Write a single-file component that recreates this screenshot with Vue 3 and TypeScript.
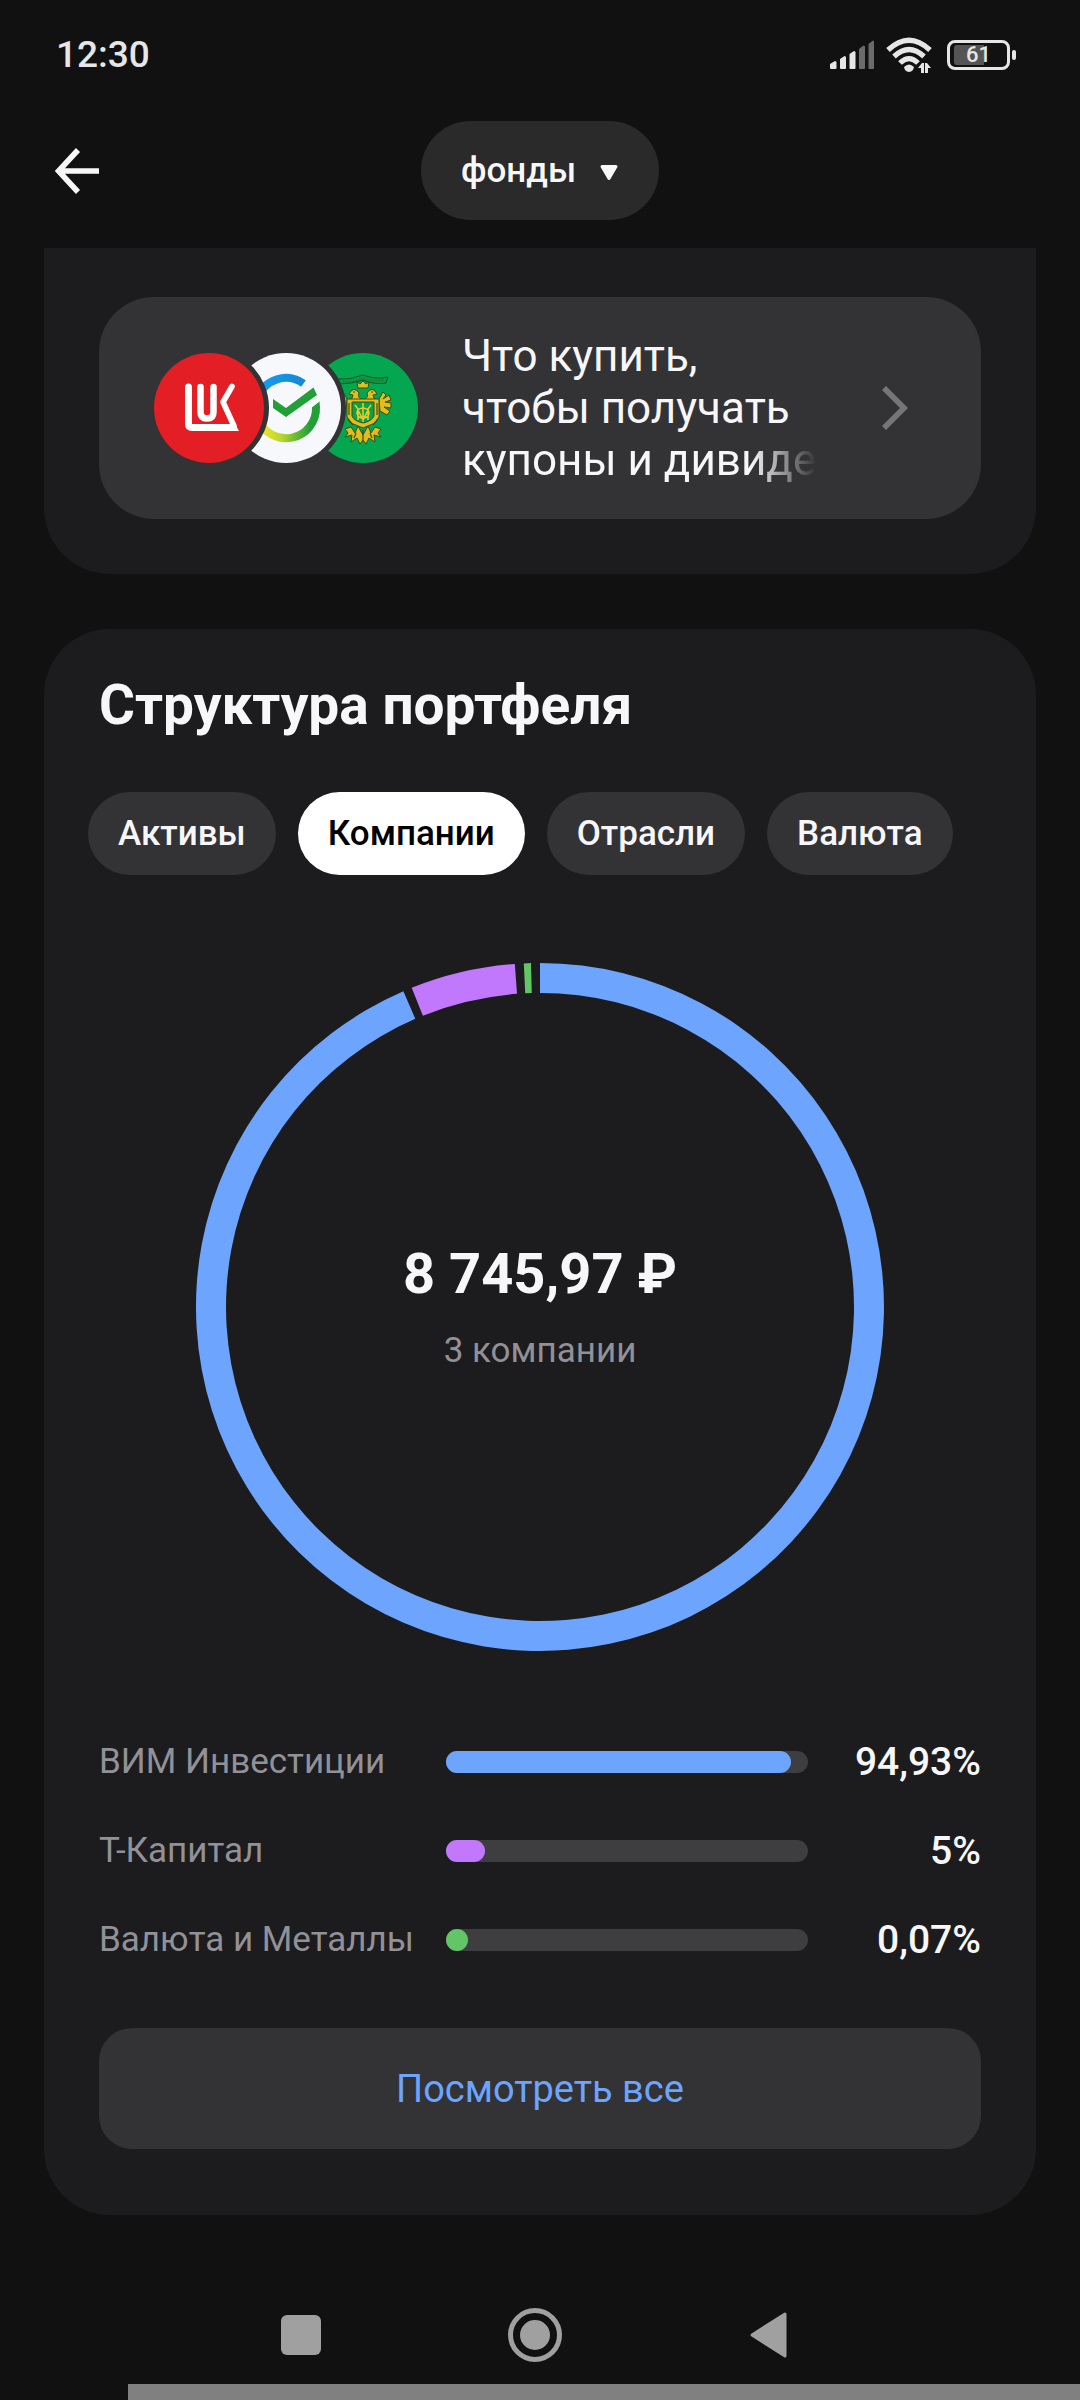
<script setup lang="ts">
import { ref } from 'vue'

interface Holding {
  name: string
  share: number
  label: string
  color: string
  sweep: number
}

const account = ref('фонды')
const tabs = ['Активы', 'Компании', 'Отрасли', 'Валюта']
const activeTab = ref('Компании')

const holdings: Holding[] = [
  { name: 'ВИМ Инвестиции', share: 0.9493, label: '94,93%', color: '#6ca4fe', sweep: 336.6 },
  { name: 'Т-Капитал', share: 0.05, label: '5%', color: '#c278fc', sweep: 17.7 },
  { name: 'Валюта и Металлы', share: 0.0007, label: '0,07%', color: '#62c566', sweep: 1.2 },
]

const GAP = 1.5
const OUTER = 344
const INNER = 314

function point(radius: number, degrees: number): string {
  const a = (degrees * Math.PI) / 180
  return `${(OUTER + radius * Math.sin(a)).toFixed(2)} ${(OUTER - radius * Math.cos(a)).toFixed(2)}`
}

let cursor = 0
const segments = holdings.map((h) => {
  const from = cursor
  const to = cursor + h.sweep
  cursor = to + GAP
  const large = h.sweep > 180 ? 1 : 0
  return {
    color: h.color,
    d: `M${point(OUTER, from)}A${OUTER} ${OUTER} 0 ${large} 1 ${point(OUTER, to)}L${point(INNER, to)}A${INNER} ${INNER} 0 ${large} 0 ${point(INNER, from)}Z`,
  }
})

// A fill never gets narrower than its own round cap.
function fillWidth(share: number): string {
  return `calc(22px + (100% - 22px) * ${share})`
}
</script>

<template>
  <div class="screen">
    <div class="status">
      <span class="time">12:30</span>
      <div class="indicators">
        <svg class="signal" width="44" height="30" viewBox="0 0 44 30" aria-hidden="true">
          <g fill="#e6e6e6">
            <path d="M0 24l5-3q1.500 0 1.500 1.500V28q0 1-1 1H1q-1 0-1-1z" />
            <path d="M10 19l4.500-3q1.500 0 1.500 1.500V28q0 1-1 1h-4q-1 0-1-1z" />
            <path d="M19.500 14l4.500-3q1.500 0 1.500 1.500V28q0 1-1 1h-4q-1 0-1-1z" />
          </g>
          <g fill="#6b6b6b">
            <path d="M29 9l4.500-3.500q1.500 0 1.500 1.500V28q0 1-1 1h-4q-1 0-1-1z" />
            <path d="M38.500 4L43 .5q1 0 1 1.500V28q0 1-1 1h-3.500q-1 0-1-1z" />
          </g>
        </svg>
        <svg class="wifi" width="47" height="36" viewBox="0 0 47 36" aria-hidden="true">
          <g fill="none" stroke="#e6e6e6" stroke-width="5.200">
            <path d="M2 13Q23 -6.500 44 13" />
            <path d="M8 19.500Q23 5.500 38 19.500" />
            <path d="M14 26Q23 17 32 26" />
          </g>
          <path d="M18 30q5-5 10 0l-1 3q-4 4-8 0z" fill="#e6e6e6" />
          <path d="M32 31l4-5h2v10h-3v-5zM39 26h2l4 5h-3v5h-3z" fill="#e6e6e6" />
        </svg>
        <span class="battery">
          <span class="battery-case">
            <span class="battery-level"></span>
            <span class="battery-text">61</span>
          </span>
          <span class="battery-tip"></span>
        </span>
      </div>
    </div>

    <header class="header">
      <button class="back" type="button" aria-label="Назад">
        <svg width="44" height="46" viewBox="0 0 44 46" aria-hidden="true">
          <path d="M23 2L3.500 23L23 44M3 23H44" fill="none" stroke="#f7f7f8" stroke-width="5.600" />
        </svg>
      </button>
      <div class="picker">
        <select v-model="account" aria-label="Счёт">
          <option value="фонды">фонды</option>
        </select>
        <svg class="caret" width="20" height="18" viewBox="0 0 20 18" aria-hidden="true">
          <path d="M3 2.500H17L10 14.500Z" fill="#f9f9fb" stroke="#f9f9fb" stroke-width="3" stroke-linejoin="round" />
        </svg>
      </div>
      <span class="header-end"></span>
    </header>

    <main class="content">
      <section class="card card-cut">
        <a class="promo" href="#">
          <svg class="logos" width="264" height="110" viewBox="0 0 264 110" aria-hidden="true">
            <defs>
              <mask id="cut-white">
                <rect width="264" height="110" fill="#fff" />
                <circle cx="55" cy="55" r="60" fill="#000" />
              </mask>
              <mask id="cut-green">
                <rect width="264" height="110" fill="#fff" />
                <circle cx="132" cy="55" r="60" fill="#000" />
              </mask>
              <linearGradient id="arc-low" gradientUnits="userSpaceOnUse" x1="108" y1="0" x2="156" y2="0">
                <stop offset="0" stop-color="#efe62a" />
                <stop offset=".4" stop-color="#b8d62f" />
                <stop offset="1" stop-color="#21a038" />
              </linearGradient>
              <linearGradient id="arc-high" gradientUnits="userSpaceOnUse" x1="108" y1="0" x2="156" y2="0">
                <stop offset="0" stop-color="#169bf0" />
                <stop offset="1" stop-color="#1686d0" />
              </linearGradient>
            </defs>
            <circle cx="55" cy="55" r="55" fill="#e31e24" />
            <g fill="none" stroke="#fff" stroke-linecap="round" stroke-linejoin="round">
              <path d="M34.500 34V71Q34.500 74.500 38 74.500H79" stroke-width="7" />
              <path d="M46.500 34V59Q46.500 65.500 53 65.500Q59.500 65.500 59.500 59V34" stroke-width="6.500" />
              <path d="M78 33.500L69 49L80 73" stroke-width="5.600" />
            </g>
            <path d="M76 71H81L85 78H74Z" fill="#fff" />
            <g mask="url(#cut-white)">
              <circle cx="132" cy="55" r="55" fill="#f6f8fb" />
              <path d="M103.700 45A30 30 0 0 1 149.500 30.600" fill="none" stroke="url(#arc-high)" stroke-width="8" />
              <path d="M104 66A30 30 0 0 0 162 54" fill="none" stroke="url(#arc-low)" stroke-width="8" />
              <path d="M158 54.500L165.500 48.500L166 55H158Z" fill="#21a038" />
              <path d="M119 46L132 55L159.500 34.500L163 42L132 64L119 55Z" fill="#21a038" />
            </g>
            <g mask="url(#cut-green)">
              <circle cx="209" cy="55" r="55" fill="#04a64f" />
              <path d="M184 26Q196 27 209 22Q222 27 234 24L232 30Q221 32 209 27Q198 31 185 31Z" fill="#0b9a45" stroke="#11572c" stroke-width="1" />
              <path d="M189 28.500Q199 30 209 25Q220 29 230 27" fill="none" stroke="#2c6d2f" stroke-width="1" stroke-dasharray="2 1" />
              <g fill="#e2bd1c" stroke="#34501a" stroke-width="1">
                <path d="M204 35L203 29L206 31L209 28L212 31L215 29L214 35Z" />
                <path d="M209 47Q203 45 205 40Q201 34 197 38L195 41L199 42Q199 46 195 47Z" />
                <path d="M209 47Q215 45 213 40Q217 34 221 38L223 41L219 42Q219 46 223 47Z" />
                <path d="M225 46L229 39L232 42L229 46L235 42L237 47L231 49L237 50L237 55L230 54L236 58L233 62L226 58Z" />
                <path d="M193 46L189 39L186 42L189 46L183 42L181 47L187 49L181 50L181 55L188 54L182 58L185 62L192 58Z" />
                <path d="M193 46H225V64L221 70L209 75L197 70L193 64Z" />
                <path d="M197 74L191 76L194 80L191 84L198 82L197 89L203 85L206 91L209 87L212 91L215 85L221 89L220 82L227 84L224 80L227 76L221 74L217 80L214 73L209 82L204 73L201 80Z" />
              </g>
              <path d="M198 49H220V63Q218 68 209 70Q200 68 198 63Z" fill="#08a04a" stroke="#34501a" />
              <path d="M201 52L204 56V67M217 52L214 56V67M204 57L209 67L214 57M209 50V69M203 60A6 5 0 0 1 215 60A6 5 0 0 1 203 60" fill="none" stroke="#e9cb25" stroke-width="1.600" />
              <path d="M194 66L199 72M224 66L219 72M209 77V87M202 80L200 85M216 80L218 85M195 50V62M223 50V62M199 39H201M217 39H219" stroke="#34501a" stroke-width="1.200" fill="none" />
            </g>
          </svg>
          <span class="promo-text">
            <span class="promo-line">Что купить,</span>
            <span class="promo-line">чтобы получать</span>
            <span class="promo-line fade">купоны и дивиденды</span>
          </span>
          <svg class="chevron" width="28" height="46" viewBox="0 0 28 46" aria-hidden="true">
            <path d="M3 3L23 23L3 43" fill="none" stroke="#767678" stroke-width="5.600" />
          </svg>
        </a>
      </section>

      <section class="card structure">
        <h1>Структура портфеля</h1>
        <div class="tabs">
          <button
            v-for="tab in tabs"
            :key="tab"
            type="button"
            class="tab"
            :class="{ active: tab === activeTab }"
            :aria-pressed="tab === activeTab"
            @click="activeTab = tab"
          >{{ tab }}</button>
        </div>

        <div class="ring">
          <svg viewBox="0 0 688 688" aria-hidden="true">
            <path v-for="s in segments" :key="s.color" :d="s.d" :fill="s.color" />
          </svg>
          <div class="summary">
            <strong>8 745,97 ₽</strong>
            <span>3 компании</span>
          </div>
        </div>

        <ul class="holdings">
          <li v-for="h in holdings" :key="h.name">
            <span class="name">{{ h.name }}</span>
            <span class="track"><span class="fill" :style="{ width: fillWidth(h.share), background: h.color }"></span></span>
            <span class="value">{{ h.label }}</span>
          </li>
        </ul>

        <button class="more" type="button">Посмотреть все</button>
      </section>
    </main>

    <nav class="system-nav">
      <button type="button" aria-label="Недавние">
        <svg width="54" height="54" viewBox="0 0 54 54"><rect x="7" y="7" width="40" height="40" rx="6" fill="#a0a0a0" /></svg>
      </button>
      <button type="button" aria-label="Домой">
        <svg width="54" height="54" viewBox="0 0 54 54">
          <circle cx="27" cy="27" r="24.500" fill="none" stroke="#a0a0a0" stroke-width="5" />
          <circle cx="27" cy="27" r="15" fill="#a0a0a0" />
        </svg>
      </button>
      <button type="button" aria-label="Назад">
        <svg width="54" height="54" viewBox="0 0 54 54"><path d="M10 27L43 6V48Z" fill="#a0a0a0" stroke="#a0a0a0" stroke-width="3" stroke-linejoin="round" /></svg>
      </button>
    </nav>
    <div class="edge"></div>
  </div>
</template>

<style>
body {
  margin: 0;
  background: #111111;
}
</style>

<style scoped>
.screen {
  display: flex;
  flex-direction: column;
  min-height: 100vh;
  background: #111111;
  color: #f7f7fa;
  font-family: Roboto, "Noto Sans", sans-serif;
}

button,
select {
  margin: 0;
  padding: 0;
  border: 0;
  background: none;
  color: inherit;
  font: inherit;
}

svg {
  display: block;
}

.status {
  display: flex;
  align-items: center;
  justify-content: space-between;
  height: 110px;
  padding: 0 64px 0 56px;
}

.time {
  color: #e6e6e6;
  font-size: 37px;
  font-weight: 500;
  line-height: 44px;
}

.indicators {
  display: flex;
  align-items: center;
  gap: 12px;
}

.battery {
  display: flex;
  align-items: center;
  gap: 2px;
  margin-left: 2px;
}

.battery-case {
  display: grid;
  align-items: center;
  box-sizing: border-box;
  width: 63px;
  height: 30px;
  border: 3px solid #e6e6e6;
  border-radius: 8px;
}

.battery-level,
.battery-text {
  grid-area: 1 / 1;
}

.battery-level {
  width: 30px;
  height: 20px;
  margin-left: 4px;
  border-radius: 3px 0 0 3px;
  background: #555555;
}

.battery-text {
  color: #e6e6e6;
  font-size: 22px;
  font-weight: 500;
  line-height: 24px;
  text-align: center;
}

.battery-tip {
  width: 4px;
  height: 10px;
  border-radius: 2px;
  background: #e6e6e6;
}

.header {
  display: grid;
  grid-template-columns: 1fr auto 1fr;
  align-items: center;
  padding: 11px 55px 28px;
}

.back {
  justify-self: start;
}

.picker {
  position: relative;
}

.picker select {
  height: 99px;
  padding: 0 82px 0 40px;
  border-radius: 50px;
  background: #2a2a2a;
  appearance: none;
  font-size: 35px;
  font-weight: 500;
}

.caret {
  position: absolute;
  top: 43px;
  right: 40px;
  pointer-events: none;
}

.content {
  display: flex;
  flex-direction: column;
  gap: 55px;
  padding: 0 44px;
}

.card {
  border-radius: 66px;
  background: #1c1c1e;
}

.card-cut {
  padding: 49px 55px 55px;
  border-radius: 0 0 66px 66px;
}

.promo {
  display: flex;
  align-items: center;
  box-sizing: border-box;
  height: 222px;
  padding: 0 72px 0 55px;
  border-radius: 55px;
  background: #333335;
  color: inherit;
  text-decoration: none;
}

.logos {
  flex: none;
}

.promo-text {
  flex: 1;
  min-width: 0;
  margin: 0 64px 0 44px;
  font-size: 44px;
  line-height: 52px;
}

.promo-line {
  display: block;
  overflow: hidden;
  white-space: nowrap;
}

.fade {
  mask-image: linear-gradient(to left, transparent, #000 66px);
}

.structure {
  padding: 44px 55px 66px;
}

h1 {
  margin: 0;
  font-size: 55px;
  font-weight: 700;
  line-height: 64px;
}

.tabs {
  display: flex;
  gap: 22px;
  margin: 55px -11px 0;
}

.tab {
  height: 83px;
  padding: 0 30px;
  border-radius: 42px;
  background: #333335;
  font-size: 35px;
  font-weight: 500;
}

.tab.active {
  background: #ffffff;
  color: #000000;
}

.ring {
  display: grid;
  place-items: center;
  max-width: 688px;
  margin: 88px auto 0;
}

.ring > * {
  grid-area: 1 / 1;
}

.ring svg {
  width: 100%;
}

.summary {
  display: flex;
  flex-direction: column;
  align-items: center;
  gap: 22px;
}

.summary strong {
  font-size: 56px;
  font-weight: 700;
  line-height: 66px;
}

.summary span {
  color: #919197;
  font-size: 35px;
  line-height: 44px;
}

.holdings {
  margin: 66px 0 44px;
  padding: 0;
  list-style: none;
}

.holdings li {
  display: grid;
  grid-template-columns: 347px 1fr 173px;
  align-items: center;
  height: 89px;
}

.name {
  color: #919197;
  font-size: 35px;
}

.track {
  display: block;
  height: 22px;
  border-radius: 11px;
  background: #3e3e40;
}

.fill {
  display: block;
  height: 22px;
  border-radius: 11px;
}

.value {
  font-size: 39px;
  font-weight: 500;
  text-align: right;
}

.more {
  display: block;
  width: 100%;
  height: 121px;
  border-radius: 33px;
  background: #333335;
  color: #6ca4fe;
  font-size: 38px;
}

.system-nav {
  display: flex;
  align-items: center;
  justify-content: center;
  gap: 180px;
  height: 98px;
  margin-top: auto;
  padding-right: 10px;
}

.edge {
  height: 16px;
  margin-left: 128px;
  background: #808080;
}
</style>
